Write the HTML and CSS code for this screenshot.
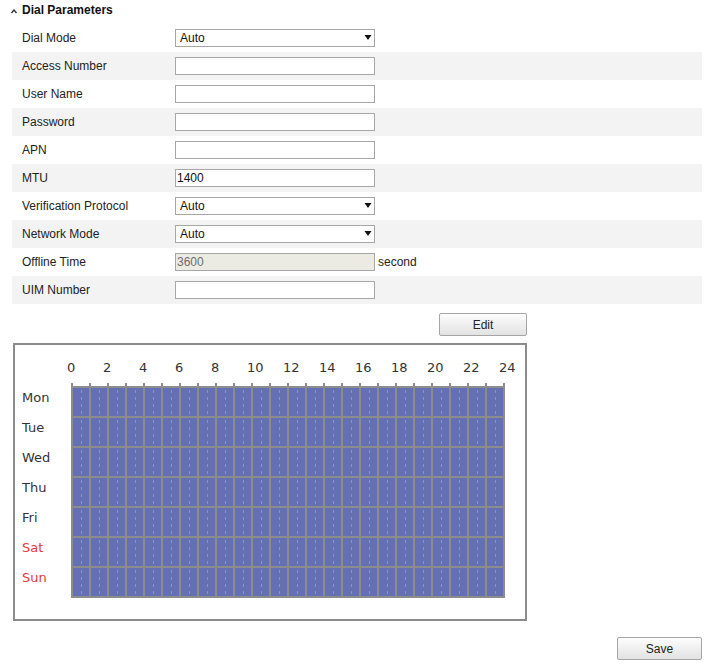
FILE: index.html
```html
<!DOCTYPE html>
<html>
<head>
<meta charset="utf-8">
<link rel="stylesheet" href="styles.css">
</head>
<body>
<div class="page">
  <div class="header">
    <svg class="chev" width="8" height="6" viewBox="0 0 8 6"><polyline points="1.5,5 4,2 6.5,5" fill="none" stroke="#333" stroke-width="1.4"/></svg>
    <span>Dial Parameters</span>
  </div>
  <div class="form">
    <div class="row"><span class="lbl">Dial Mode</span><div class="sel"><select><option>Auto</option></select><svg class="arrow" width="8" height="5" viewBox="0 0 8 5"><polygon points="0.5,0 7.5,0 4,5" fill="#111"/></svg></div></div>
    <div class="row"><span class="lbl">Access Number</span><input class="txt" type="text" value=""></div>
    <div class="row"><span class="lbl">User Name</span><input class="txt" type="text" value=""></div>
    <div class="row"><span class="lbl">Password</span><input class="txt" type="text" value=""></div>
    <div class="row"><span class="lbl">APN</span><input class="txt" type="text" value=""></div>
    <div class="row"><span class="lbl">MTU</span><input class="txt" type="text" value="1400"></div>
    <div class="row"><span class="lbl">Verification Protocol</span><div class="sel"><select><option>Auto</option></select><svg class="arrow" width="8" height="5" viewBox="0 0 8 5"><polygon points="0.5,0 7.5,0 4,5" fill="#111"/></svg></div></div>
    <div class="row"><span class="lbl">Network Mode</span><div class="sel"><select><option>Auto</option></select><svg class="arrow" width="8" height="5" viewBox="0 0 8 5"><polygon points="0.5,0 7.5,0 4,5" fill="#111"/></svg></div></div>
    <div class="row"><span class="lbl">Offline Time</span><input class="txt dis" type="text" value="3600" disabled><span class="unit">second</span></div>
    <div class="row"><span class="lbl">UIM Number</span><input class="txt" type="text" value=""></div>
  </div>

  <div class="edit-row"><button class="btn edit">Edit</button></div>

  <div class="sched">
    <div class="hours"><span>0</span><span>2</span><span>4</span><span>6</span><span>8</span><span>10</span><span>12</span><span>14</span><span>16</span><span>18</span><span>20</span><span>22</span><span>24</span></div>
    <div class="ticks"></div>
    <div class="days">
      <div>Mon</div><div>Tue</div><div>Wed</div><div>Thu</div><div>Fri</div><div class="we">Sat</div><div class="we">Sun</div>
    </div>
    <div class="grid">
      <i></i><i></i><i></i><i></i><i></i><i></i><i></i><i></i><i></i><i></i><i></i><i></i><i></i><i></i><i></i><i></i><i></i><i></i><i></i><i></i><i></i><i></i><i></i><i></i>
      <i></i><i></i><i></i><i></i><i></i><i></i><i></i><i></i><i></i><i></i><i></i><i></i><i></i><i></i><i></i><i></i><i></i><i></i><i></i><i></i><i></i><i></i><i></i><i></i>
      <i></i><i></i><i></i><i></i><i></i><i></i><i></i><i></i><i></i><i></i><i></i><i></i><i></i><i></i><i></i><i></i><i></i><i></i><i></i><i></i><i></i><i></i><i></i><i></i>
      <i></i><i></i><i></i><i></i><i></i><i></i><i></i><i></i><i></i><i></i><i></i><i></i><i></i><i></i><i></i><i></i><i></i><i></i><i></i><i></i><i></i><i></i><i></i><i></i>
      <i></i><i></i><i></i><i></i><i></i><i></i><i></i><i></i><i></i><i></i><i></i><i></i><i></i><i></i><i></i><i></i><i></i><i></i><i></i><i></i><i></i><i></i><i></i><i></i>
      <i></i><i></i><i></i><i></i><i></i><i></i><i></i><i></i><i></i><i></i><i></i><i></i><i></i><i></i><i></i><i></i><i></i><i></i><i></i><i></i><i></i><i></i><i></i><i></i>
      <i></i><i></i><i></i><i></i><i></i><i></i><i></i><i></i><i></i><i></i><i></i><i></i><i></i><i></i><i></i><i></i><i></i><i></i><i></i><i></i><i></i><i></i><i></i><i></i>
    </div>
  </div>

  <div class="save-row"><button class="btn save">Save</button></div>
</div>
</body>
</html>
```

FILE: styles.css
```css
* { box-sizing: border-box; }
html, body { margin: 0; padding: 0; background: #fff; }
body {
  font-family: "Liberation Sans", Arial, sans-serif;
  font-size: 12px;
  color: #222;
}
.page {
  width: 702px;
  padding-left: 12px;
}
.header {
  height: 24px;
  line-height: 20px;
  display: flex;
  align-items: flex-start;
  margin-left: -2px;
  font-weight: bold;
  color: #111;
}
.chev { margin-top: 8px; margin-right: 4px; flex: none; }

.form { width: 690px; }
.row {
  height: 28px;
  display: flex;
  align-items: center;
  padding-left: 10px;
}
.row:nth-child(even) { background: #f3f3f3; }
.lbl {
  width: 153px;
  flex: none;
  line-height: 28px;
  color: #222;
}
.sel { position: relative; width: 200px; height: 18px; }
.sel select {
  -webkit-appearance: none;
  appearance: none;
  width: 200px;
  height: 18px;
  border: 1px solid #a7a7a7;
  border-radius: 0;
  background: #fff;
  padding: 0 0 0 4px;
  margin: 0;
  font-family: "Liberation Sans", Arial, sans-serif;
  font-size: 12px;
  color: #111;
  outline: none;
}
.arrow { position: absolute; right: 3px; top: 6px; pointer-events: none; }
.txt {
  width: 200px;
  height: 18px;
  border: 1px solid #a7a7a7;
  border-radius: 0;
  padding: 0 1px;
  margin: 0;
  font-family: "Liberation Sans", Arial, sans-serif;
  font-size: 12px;
  color: #111;
  background: #fff;
  outline: none;
}
.txt.dis { background: #ebebe4; color: #6d6d6d; }
.unit { margin-left: 3px; color: #222; }

.btn {
  height: 23px;
  border: 1px solid #a5a5a5;
  border-radius: 2px;
  background: linear-gradient(#fdfdfd, #e2e2e2);
  font-family: "Liberation Sans", Arial, sans-serif;
  font-size: 12px;
  color: #222;
  padding: 0;
  margin: 0;
}
.edit-row {
  width: 515px;
  display: flex;
  justify-content: flex-end;
  margin-top: 9px;
}
.edit { width: 88px; }

.sched {
  margin-top: 7px;
  margin-left: 1px;
  width: 514px;
  height: 278px;
  border: 2px solid #8c8c8c;
  padding: 15px 0 0 7px;
  display: grid;
  grid-template-columns: 49px 434px;
  grid-template-rows: 16px 3px auto;
  row-gap: 0;
  font-family: "DejaVu Sans", Verdana, sans-serif;
  font-size: 13px;
  color: #333;
}
.hours {
  grid-column: 2;
  grid-row: 1;
  display: flex;
  margin-left: -4px;
  line-height: 16px;
}
.hours span { width: 36px; flex: none; }
.ticks {
  grid-column: 2;
  grid-row: 2;
  margin-top: 7px;
  height: 3px;
  background: repeating-linear-gradient(to right, #8c8c8c 0 2px, transparent 2px 18px);
}
.days {
  grid-column: 1;
  grid-row: 3;
  margin-top: 4px;
}
.days div { height: 30px; line-height: 30px; }
.days .we { color: #e23b3b; }
.grid {
  grid-column: 2;
  grid-row: 3;
  margin-top: 7px;
  width: 434px;
  display: grid;
  grid-template-columns: repeat(24, 16px);
  grid-auto-rows: 28px;
  gap: 2px;
  padding: 2px;
  background: #8c8c8c;
  align-self: start;
}
.grid i {
  display: block;
  background: linear-gradient(#8c92c6 3px, transparent 3px) 8px 2px / 1px 7px repeat-y, #6570b4;
}

.save-row {
  width: 690px;
  display: flex;
  justify-content: flex-end;
  margin-top: 16px;
}
.save { width: 85px; }
```
